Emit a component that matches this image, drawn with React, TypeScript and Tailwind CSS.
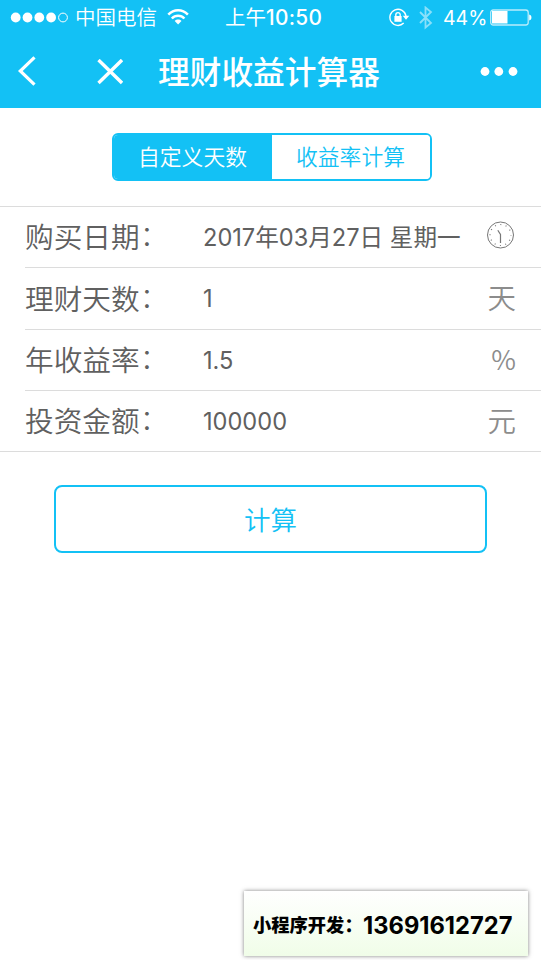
import { useState } from "react";

interface FieldRow {
  id: string;
  label: string;
  value: string;
  unit?: string;
  height: string;
}

const rows: FieldRow[] = [
  { id: "date", label: "购买日期", value: "2017年03月27日 星期一", height: "h-[61px]" },
  { id: "days", label: "理财天数", value: "1", unit: "天", height: "h-[62px]" },
  { id: "rate", label: "年收益率", value: "1.5", unit: "%", height: "h-[61px]" },
  { id: "amount", label: "投资金额", value: "100000", unit: "元", height: "h-[60px]" },
];

export default function App() {
  const [tab, setTab] = useState<"days" | "rate">("days");

  return (
    <div className="relative h-[960px] w-[541px] overflow-hidden bg-white font-['Inter','Noto_Sans_CJK_SC',sans-serif] text-[#606060]">
      <header className="h-[108px] bg-[#13c1f5] text-white">
        <StatusBar />
        <NavBar />
      </header>

      {/* Mode switch */}
      <div className="flex h-[98px] justify-center pt-[25px] pl-[2px]">
        <div className="flex h-12 w-80 overflow-hidden rounded-md border-2 border-[#13c1f5]">
          <TabButton label="自定义天数" active={tab === "days"} onClick={() => setTab("days")} />
          <TabButton label="收益率计算" active={tab === "rate"} onClick={() => setTab("rate")} />
        </div>
      </div>

      {/* Form */}
      <div className="border-y border-[#dcdcdc]">
        {rows.map((row, i) => (
          <div key={row.id} className="pl-[25px]">
            <div
              className={`flex items-center pr-[25px] ${row.height} ${
                i < rows.length - 1 ? "border-b border-[#dcdcdc]" : ""
              }`}
            >
              <span className="flex w-[178px] shrink-0 pt-[3px] text-[28.7px] leading-none font-[350] whitespace-nowrap">
                {row.label}
                <span className="-mt-[2px] font-light">：</span>
              </span>
              <span className="flex-1 pt-px text-[23.6px] leading-none font-[375] whitespace-pre">{row.value}</span>
              {row.unit ? (
                <span
                  className={`leading-none font-[350] text-[#8c8c8c] ${
                    row.unit === "%" ? "pb-[3px] font-['Noto_Sans_CJK_SC'] text-[27px]" : "pt-[2px] text-[28.5px]"
                  }`}
                >
                  {row.unit}
                </span>
              ) : (
                <ClockIcon />
              )}
            </div>
          </div>
        ))}
      </div>

      <button className="mx-auto mt-[33px] flex h-[68px] w-[433px] items-center justify-center rounded-lg border-2 border-[#13c1f5] pt-[2px] text-[26.5px] leading-none font-[350] text-[#13c1f5]">
        计算
      </button>

      {/* Contact banner */}
      <div className="absolute top-[891px] left-[244px] flex h-[65px] w-[284px] items-center bg-linear-to-b from-white to-[#f0fde8] pt-1 pl-[9px] whitespace-nowrap text-black shadow-[0_0_4px_rgba(0,0,0,0.5)]">
        <span className="w-[110px] text-[18.3px] leading-none font-black">小程序开发：</span>
        <span className="text-[23.7px] leading-none font-bold">13691612727</span>
      </div>
    </div>
  );
}

function StatusBar() {
  return (
    <div className="flex h-9 items-center text-[20px] leading-none">
      <svg className="ml-[10px] h-3 w-[60px]" viewBox="0 0 60 12" fill="white">
        <circle cx="5.7" cy="5.5" r="4.9" />
        <circle cx="17.5" cy="5.5" r="4.9" />
        <circle cx="29.3" cy="5.5" r="4.9" />
        <circle cx="41.1" cy="5.5" r="4.9" />
        <circle cx="53" cy="5.5" r="4.4" fill="none" stroke="white" />
      </svg>
      <span className="ml-[5px] w-[92px] pt-px text-[20.5px] font-[350]">中国电信</span>
      <svg className="h-[18px] w-[22px]" viewBox="0 0 22 18" fill="none" stroke="white" strokeWidth="2.5">
        <path d="M1.3 5.7C6.8-.2 15.4-.2 20.9 5.7" />
        <path d="M4.8 9.5c3.5-3.8 9.1-3.8 12.6 0" />
        <path d="M11.1 15.5 7.7 12c1.9-1.9 4.9-1.9 6.8 0Z" fill="white" stroke="none" />
      </svg>
      <span className="ml-[36px] flex w-[164px] items-center whitespace-nowrap">
        <span className="pt-px text-[20.5px] font-normal">上午</span>
        <span className="text-[20.8px] font-medium tracking-[0.3px]">10:50</span>
      </span>
      <svg className="h-5 w-[22px]" viewBox="0 0 22 20" fill="none" stroke="white" strokeWidth="1.4">
        <path d="M14.7 15.1A8.1 8.1 0 1 1 17 8" />
        <path d="M13.7 7.7h6.6l-3.300 4Z" fill="white" stroke="none" />
        <path d="M5.4 8h7.200v5.800H5.400Z" fill="white" stroke="none" />
        <path d="M6.800 8.300V6.800a2.200 2.200 0 0 1 4.400 0v1.500" />
      </svg>
      <svg
        className="ml-[7px] h-6 w-4"
        viewBox="0 0 16 24"
        fill="none"
        stroke="white"
        strokeOpacity="0.5"
        strokeWidth="1.8"
      >
        <path d="m2 6 11 11-5.5 4.500v-20L13 6 2 17" />
      </svg>
      <span className="ml-[9px] w-[47px] pt-px text-[19.5px] whitespace-nowrap">44%</span>
      <svg className="h-[18px] w-[43px]" viewBox="0 0 43 18" fill="none">
        <rect x="0.7" y="1" width="37.5" height="15" rx="2.5" stroke="white" strokeOpacity="0.7" strokeWidth="1.3" />
        <rect x="2" y="2" width="15.5" height="12.5" fill="white" />
        <path d="M39.2 5.500c3 .5 3 5.500 0 6Z" fill="white" />
      </svg>
    </div>
  );
}

function NavBar() {
  return (
    <div className="flex h-[72px] items-center">
      <svg className="ml-[17px] h-8 w-5" viewBox="0 0 20 32" fill="none" stroke="white" strokeWidth="3.2">
        <path d="M17.5 1.300 3.300 15l14.200 13.700" />
      </svg>
      <svg className="ml-[60px] h-[26px] w-[26px]" viewBox="0 0 26 26" fill="none" stroke="white" strokeWidth="3.4">
        <path d="m1.500 1 23.500 23M25 1 1.500 24" />
      </svg>
      <h1 className="ml-[35px] w-[321px] pt-[2px] text-[31.7px] leading-none font-medium whitespace-nowrap">
        理财收益计算器
      </h1>
      <svg className="h-[10px] w-[40px]" viewBox="0 0 40 10" fill="white">
        <circle cx="6" cy="4.5" r="4.4" />
        <circle cx="19.8" cy="4.5" r="4.4" />
        <circle cx="34" cy="4.5" r="4.4" />
      </svg>
    </div>
  );
}

function TabButton({ label, active, onClick }: { label: string; active: boolean; onClick: () => void }) {
  return (
    <button
      onClick={onClick}
      className={`flex-1 pt-px text-[21.8px] leading-none font-[350] ${
        active ? "bg-[#13c1f5] text-white" : "bg-white text-[#13c1f5]"
      }`}
    >
      {label}
    </button>
  );
}

function ClockIcon() {
  return (
    <svg className="mr-[1px] mb-[4px] h-7 w-7" viewBox="0 0 28 28" fill="none" stroke="#777">
      <circle cx="13.5" cy="14" r="13" />
      <circle cx="13.5" cy="14" r="10.5" strokeWidth="1.2" strokeDasharray="1 4.498" strokeDashoffset="0.5" />
      <path d="m10.8 9.200 2.700 4.300v8.500" strokeWidth="1.2" />
    </svg>
  );
}
